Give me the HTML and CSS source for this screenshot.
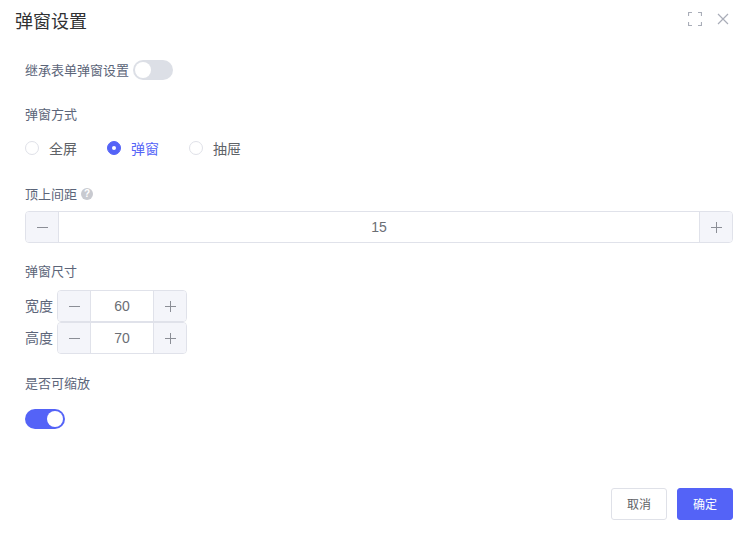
FILE: index.html
```html
<!DOCTYPE html>
<html lang="zh-CN">
<head>
  <meta charset="UTF-8" />
  <title>弹窗设置</title>
  <link rel="stylesheet" href="styles.css">
</head>
<body>
  <div class="dialog">
    <div class="header">
      <span class="title">弹窗设置</span>
      <div class="tools">
        <svg class="tool-icon" viewBox="0 0 14 14" width="14" height="14"><path d="M.5 4V.5H4M10 .5h3.500V4M13.500 10v3.500H10M4 13.500H.5V10" /></svg>
        <svg class="tool-icon" viewBox="0 0 12 12" width="12" height="12"><path d="M1 1l10 10M11 1L1 11" /></svg>
      </div>
    </div>

    <div class="body">
      <div class="row-inherit">
        <span class="label">继承表单弹窗设置</span>
        <span class="switch"><span class="knob"></span></span>
      </div>

      <div class="label section-mode">弹窗方式</div>
      <div class="radios">
        <span class="radio"><span class="dot"></span>全屏</span>
        <span class="radio on"><span class="dot"></span>弹窗</span>
        <span class="radio"><span class="dot"></span>抽屉</span>
      </div>

      <div class="label section-top">顶上间距 <span class="help">?</span></div>
      <div class="stepper wide">
        <span class="step"><svg viewBox="0 0 11 11" width="11" height="11"><path d="M0 5.500h11" /></svg></span>
        <span class="val">15</span>
        <span class="step"><svg viewBox="0 0 11 11" width="11" height="11"><path d="M0 5.500h11M5.500 0v11" /></svg></span>
      </div>

      <div class="label section-size">弹窗尺寸</div>
      <div class="size-row">
        <span class="label size-label">宽度</span>
        <div class="stepper">
          <span class="step"><svg viewBox="0 0 11 11" width="11" height="11"><path d="M0 5.500h11" /></svg></span>
          <span class="val">60</span>
          <span class="step"><svg viewBox="0 0 11 11" width="11" height="11"><path d="M0 5.500h11M5.500 0v11" /></svg></span>
        </div>
      </div>
      <div class="size-row">
        <span class="label size-label">高度</span>
        <div class="stepper">
          <span class="step"><svg viewBox="0 0 11 11" width="11" height="11"><path d="M0 5.500h11" /></svg></span>
          <span class="val">70</span>
          <span class="step"><svg viewBox="0 0 11 11" width="11" height="11"><path d="M0 5.500h11M5.500 0v11" /></svg></span>
        </div>
      </div>

      <div class="label section-zoom">是否可缩放</div>
      <span class="switch checked"><span class="knob"></span></span>
    </div>

    <div class="footer">
      <span class="btn">取消</span>
      <span class="btn primary">确定</span>
    </div>
  </div>
</body>
</html>
```

FILE: styles.css
```css
* {
  box-sizing: border-box;
}
html, body {
  margin: 0;
  height: 100%;
}
body {
  font-family: "Noto Sans CJK SC", "Liberation Sans", sans-serif;
  font-size: 13px;
  background: #fff;
  overflow: hidden;
}
.dialog {
  width: 751px;
  height: 535px;
  display: flex;
  flex-direction: column;
}
.header {
  height: 40px;
  padding: 0 22px 0 15px;
  display: flex;
  justify-content: space-between;
  align-items: center;
}
.title {
  font-size: 18px;
  color: #303133;
  line-height: 22px;
}
.tools {
  display: flex;
  align-items: center;
  gap: 15px;
  margin-bottom: 2px;
}
.tool-icon {
  fill: none;
  stroke: #a9adb8;
  stroke-width: 1.2;
}
.body {
  flex: 1;
  padding: 0 18px 0 25px;
}
.label {
  color: #5c6579;
  line-height: 20px;
}
.row-inherit {
  margin-top: 20px;
  display: flex;
  align-items: center;
  gap: 4px;
  height: 20px;
}
.switch {
  display: block;
  width: 40px;
  height: 20px;
  border-radius: 10px;
  background: #dcdfe6;
  padding: 2px;
}
.knob {
  display: block;
  width: 16px;
  height: 16px;
  border-radius: 50%;
  background: #fff;
}
.switch.checked {
  background: #5463f7;
}
.switch.checked .knob {
  margin-left: 20px;
}
.section-mode {
  margin-top: 24px;
}
.radios {
  display: flex;
  margin-top: 14px;
  height: 20px;
  align-items: center;
  font-size: 14px;
}
.radio {
  display: flex;
  align-items: center;
  color: #5f6368;
  width: 82px;
  line-height: 18px;
}
.dot {
  width: 14px;
  height: 14px;
  border: 1px solid #dfe1e8;
  border-radius: 50%;
  margin-right: 10px;
}
.radio.on {
  color: #5463f7;
}
.radio.on .dot {
  background: #5463f7;
  border-color: #5463f7;
  display: flex;
  align-items: center;
  justify-content: center;
}
.radio.on .dot::after {
  content: "";
  width: 4px;
  height: 4px;
  border-radius: 50%;
  background: #fff;
}
.section-top {
  margin-top: 26px;
  display: flex;
  align-items: center;
  gap: 4px;
}
.help {
  width: 12px;
  height: 12px;
  border-radius: 50%;
  background: #c8cad0;
  color: #fff;
  font-size: 10px;
  font-weight: bold;
  line-height: 12px;
  text-align: center;
  font-family: "Liberation Sans", sans-serif;
}
.stepper {
  width: 130px;
  height: 32px;
  display: flex;
  border: 1px solid #e0e2ea;
  border-radius: 4px;
  overflow: hidden;
}
.stepper.wide {
  width: 708px;
  margin-top: 7px;
}
.step {
  width: 33px;
  background: #f4f5fa;
  border-right: 1px solid #e0e2ea;
  display: flex;
  align-items: center;
  justify-content: center;
}
.step:last-child {
  border-right: 0;
  border-left: 1px solid #e0e2ea;
}
.step svg {
  fill: none;
  stroke: #8b8e96;
  stroke-width: 1;
}
.val {
  flex: 1;
  text-align: center;
  color: #6b6e75;
  font-family: "Liberation Sans", sans-serif;
  font-size: 14px;
  line-height: 30px;
}
.section-size {
  margin-top: 18px;
  margin-bottom: 9px;
}
.size-row {
  display: flex;
  align-items: center;
  gap: 4px;
}
.size-label {
  font-size: 14px;
  margin-bottom: 2px;
}
.section-zoom {
  margin-top: 19px;
  margin-bottom: 16px;
}
.footer {
  display: flex;
  justify-content: flex-end;
  gap: 10px;
  padding: 0 18px 15px 0;
}
.btn {
  width: 56px;
  height: 32px;
  border: 1px solid #dfe1e8;
  border-radius: 3px;
  color: #606266;
  font-size: 12px;
  line-height: 30px;
  text-align: center;
}
.btn.primary {
  background: #5463f7;
  border-color: #5463f7;
  color: #fff;
}
```
